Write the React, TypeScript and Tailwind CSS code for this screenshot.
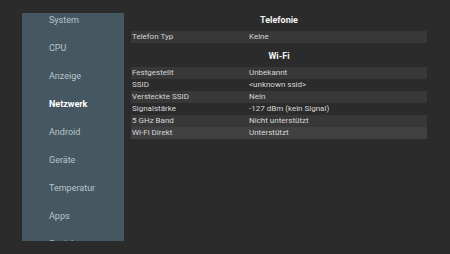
const menu = ['System', 'CPU', 'Anzeige', 'Netzwerk', 'Android', 'Geräte', 'Temperatur', 'Apps', 'Speicher'];

type Row = { label: string; value: string; shade?: 'dark' | 'light' };

const telefonie: Row[] = [{ label: 'Telefon Typ', value: 'Keine', shade: 'dark' }];

const wifi: Row[] = [
  { label: 'Festgestellt', value: 'Unbekannt', shade: 'dark' },
  { label: 'SSID', value: '<unknown ssid>' },
  { label: 'Versteckte SSID', value: 'Nein', shade: 'dark' },
  { label: 'Signalstärke', value: '-127 dBm (kein Signal)' },
  { label: '5 GHz Band', value: 'Nicht unterstützt', shade: 'dark' },
  { label: 'Wi-Fi Direkt', value: 'Unterstützt', shade: 'light' },
];

function Section({ title, rows }: { title: string; rows: Row[] }) {
  return (
    <div>
      <div className="h-[24px] pt-[4px] flex items-center justify-center text-[9px] font-bold text-[#f2f2f2]">{title}</div>
      {rows.map((r) => (
        <div
          key={r.label}
          className={
            'h-[12px] flex items-center text-[8px] text-[#d6d6d6] ' +
            (r.shade === 'dark' ? 'bg-[#383838]' : r.shade === 'light' ? 'bg-[#414141]' : '')
          }
        >
          <span className="w-[118px] pl-[1px]">{r.label}</span>
          <span>{r.value}</span>
        </div>
      ))}
    </div>
  );
}

export default function App() {
  return (
    <div
      className="w-[450px] h-[254px] bg-[#2b2b2b] flex overflow-hidden"
      style={{ fontFamily: 'Roboto, "Noto Sans", sans-serif' }}
    >
      <div className="ml-[22px] mt-[13px] w-[102px] h-[228px] bg-[#455862] overflow-hidden">
        <div className="-mt-[6px]">
          {menu.map((m) => (
            <div
              key={m}
              className={
                'h-[28px] flex items-center pl-[27px] text-[9px] ' +
                (m === 'Netzwerk' ? 'text-white font-bold' : 'text-[#b9c3c8]')
              }
            >
              {m}
            </div>
          ))}
        </div>
      </div>
      <div className="ml-[7px] mt-[7px] w-[296px]">
        <Section title="Telefonie" rows={telefonie} />
        <Section title="Wi-Fi" rows={wifi} />
      </div>
    </div>
  );
}
